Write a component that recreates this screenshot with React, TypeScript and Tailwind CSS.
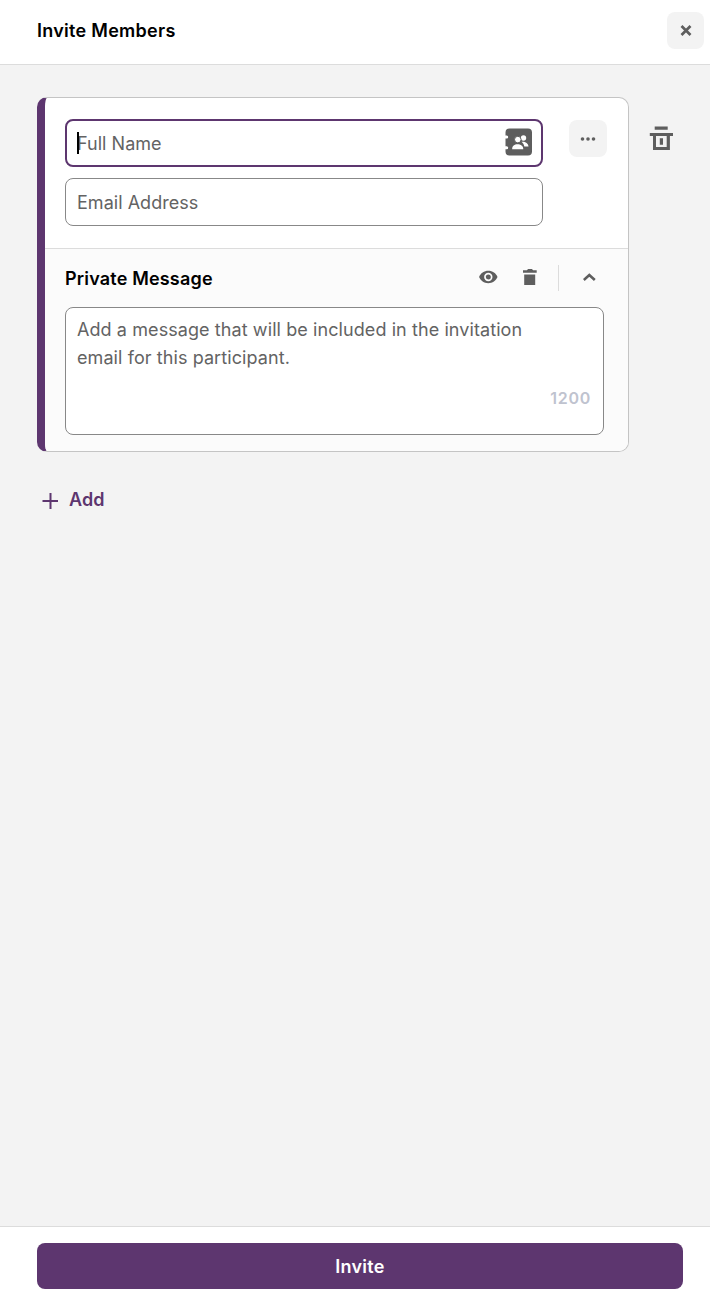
import { ReactNode } from "react";

function IconButton({ label, className = "", children }: { label: string; className?: string; children: ReactNode }) {
  return (
    <button
      type="button"
      aria-label={label}
      className={`flex shrink-0 items-center justify-center text-[#5e5e5e] ${className}`}
    >
      {children}
    </button>
  );
}

function ContactsIcon() {
  return (
    <svg width="28" height="28" viewBox="0 0 28 28" className="shrink-0">
      <path
        fill="#5e5e5e"
        d="M4.500 .5h18.500A4 4 0 0 1 27 4.500v19a4 4 0 0 1-4 4H4.500a4 4 0 0 1-4-4v-2.200h1.200a1.500 1.500 0 0 0 0-3H.5V10.500h1.200a1.500 1.500 0 0 0 0-3H.5V4.500a4 4 0 0 1 4-4z"
      />
      <g fill="#fff">
        <circle cx="18.500" cy="10" r="2.700" />
        <path d="M16.500 13.800c3.500-.5 6.800 1.500 7 4.600h-4.200c-.4-1.900-1.300-3.200-2.800-4.600z" />
        <circle cx="12.800" cy="11.600" r="3.300" stroke="#5e5e5e" strokeWidth="1" />
        <path d="M7.200 21.200c-.3-3 2.300-4.900 5.300-4.900s6 1.900 5.700 4.900z" />
      </g>
    </svg>
  );
}

function Header() {
  return (
    <header className="flex h-[65px] shrink-0 items-start justify-between border-b border-[#dcdcdc] bg-white pt-3 pr-1.5 pl-[37px]">
      <h1 className="pt-1 text-[18px] leading-[29px] font-semibold tracking-[0.28px] text-black">Invite Members</h1>
      <IconButton label="Close" className="h-[37px] w-[37px] rounded-lg bg-[#f3f3f3]">
        <svg width="12" height="12" viewBox="0 0 12 12" stroke="currentColor" strokeWidth="2.700">
          <path d="M1.500 1l9 9M10.500 1l-9 9" />
        </svg>
      </IconButton>
    </header>
  );
}

function MessageSection() {
  return (
    <section className="flex-1 border-t border-[#dcdcdc] bg-[#fbfbfb] pl-5">
      <div className="flex h-[58px] items-center">
        <h2 className="flex-1 text-[18px] font-semibold tracking-[0.18px] text-black">Private Message</h2>
        <IconButton label="Preview" className="mr-[26px] w-[18px] pb-0.5">
          <svg width="20" height="14" viewBox="0 0 20 14" className="shrink-0">
            <path
              fill="currentColor"
              fillRule="evenodd"
              d="M10.300.8C6.100.8 2.600 3.300 1.100 7c1.500 3.700 5 6.200 9.200 6.200s7.700-2.500 9.200-6.200C18 3.300 14.500.8 10.300.8zM10.300 11.200a4.200 4.200 0 1 1 0-8.400 4.200 4.200 0 0 1 0 8.400zM10.300 9.500a2.500 2.500 0 1 0 0-5 2.500 2.500 0 0 0 0 5z"
            />
          </svg>
        </IconButton>
        <IconButton label="Delete message" className="mr-[21px] w-[14px] pb-0.5">
          <svg width="14" height="16" viewBox="0 0 14 16" fill="currentColor" className="shrink-0">
            <path d="M0 1.200h4L5 0h4l1 1.200h3.700v2.600H0zM1.200 5.500h11V16h-11z" />
          </svg>
        </IconButton>
        <span className="h-[26px] w-px bg-[#dcdcdc]" />
        <IconButton label="Collapse" className="mr-[33px] ml-[24px] w-[12px] pb-[3px]">
          <svg width="13" height="8" viewBox="0 0 13 8" fill="none" stroke="currentColor" strokeWidth="2.600" className="shrink-0">
            <path d="M.8 7l5.500-5 5.500 5" />
          </svg>
        </IconButton>
      </div>
      <div className="flex h-32 w-[539px] flex-col rounded-lg border border-[#888] bg-white px-[11px] pt-2">
        <p className="text-[18px] leading-7 tracking-[0.085px] text-[#636363]">
          Add a message that will be included in the invitation
          <br />
          email for this participant.
        </p>
        <span className="mt-3 pr-[1px] text-right text-[16px] leading-7 font-semibold tracking-[0.75px] text-[#bfc3cf]">1200</span>
      </div>
    </section>
  );
}

function MemberCard() {
  return (
    <div className="flex">
      <div className="flex h-[355px] w-[592px] flex-col overflow-hidden rounded-[10px] border border-l-8 border-[#c4c4c4] border-l-[#5d366f] bg-white">
        <div className="flex h-[150px] pt-[21px] pl-5">
          <div className="flex w-[478px] flex-col gap-[11px] text-[18px] tracking-[0.03px] text-[#636363]">
            <div className="relative flex h-12 items-center justify-between rounded-lg border-2 border-[#5d366f] pr-2 pb-0.5 pl-[10px]">
              <span className="absolute top-[11px] left-[10px] h-[22px] w-[2px] bg-black" />
              <span className="pt-[3px]">Full Name</span>
              <ContactsIcon />
            </div>
            <div className="flex h-12 items-center rounded-lg border border-[#888] px-[11px]">Email Address</div>
          </div>
          <IconButton label="More options" className="mt-[1px] ml-[26px] h-[37px] w-[38px] rounded-lg bg-[#f3f3f3]">
            <svg width="16" height="4" viewBox="0 0 16 4" fill="currentColor">
              <circle cx="2.500" cy="2" r="1.800" />
              <circle cx="8" cy="2" r="1.800" />
              <circle cx="13.500" cy="2" r="1.800" />
            </svg>
          </IconButton>
        </div>
        <MessageSection />
      </div>
      <IconButton label="Remove member" className="mt-[29px] ml-5 h-6 w-6">
        <svg width="24" height="24" viewBox="0 0 24 24" fill="currentColor">
          <path fillRule="evenodd" d="M5.700.5h13v3.300h-13zM.8 7H24v3h-3.100v14H4V10H.8zM7 10v11h10.700V10zM10.800 12.200h3.200v6.500h-3.200z" />
        </svg>
      </IconButton>
    </div>
  );
}

export default function App() {
  return (
    <div className="flex h-screen flex-col bg-[#f3f3f3] font-['Inter',sans-serif]">
      <Header />
      <main className="flex-1 pt-8 pl-[37px]">
        <MemberCard />
        <button type="button" className="mt-[34px] flex items-center gap-[11px] pl-[5px] text-[18px] font-semibold tracking-[0.15px] text-[#5d366f]">
          <svg width="16" height="16" viewBox="0 0 16 16" stroke="currentColor" strokeWidth="2" className="mt-0.5">
            <path d="M8.500 0v16M.5 8H16" />
          </svg>
          Add
        </button>
      </main>
      <footer className="h-[84px] shrink-0 border-t border-[#dcdcdc] bg-white px-[37px] pt-4">
        <button type="button" className="h-[46px] w-[646px] rounded-lg bg-[#5d366f] text-[18px] font-semibold tracking-[0.3px] text-white">
          Invite
        </button>
      </footer>
    </div>
  );
}
